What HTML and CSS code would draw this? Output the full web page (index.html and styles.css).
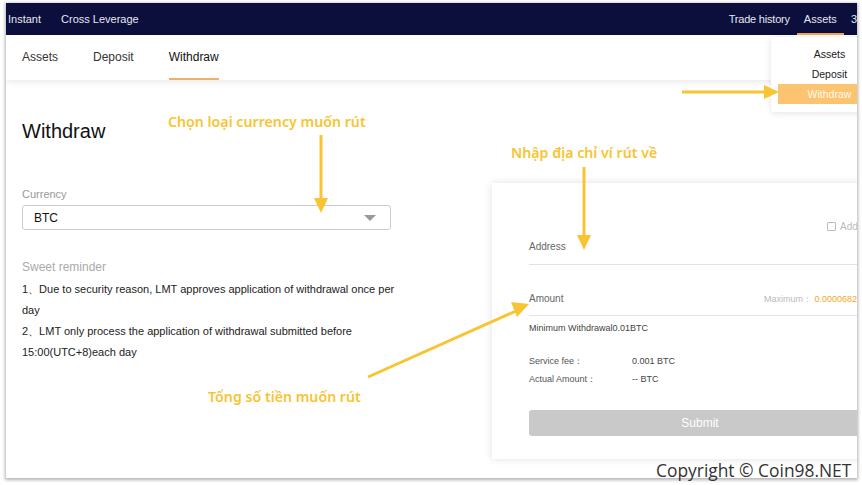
FILE: index.html
```html
<!DOCTYPE html>
<html lang="vi">
	<head>
		<title>Withdraw</title>
		<meta charset="UTF-8">
		<link rel="stylesheet" href="styles.css">
	</head>
	<body>
		<div class="frame">
			<div class="topBar">
				<div class="topLeft">
					<span>Instant</span>
					<span>Cross Leverage</span>
				</div>
				<div class="topRight">
					<span class="topItem">Trade history</span>
					<span class="topItem topActive">Assets</span>
					<span class="topItem">3</span>
				</div>
			</div>
			<div class="subNav">
				<span class="subItem">Assets</span>
				<span class="subItem">Deposit</span>
				<span class="subItem subActive">Withdraw</span>
			</div>
			<div class="content">
				<div class="leftCol">
					<h1>Withdraw</h1>
					<p class="fieldLabel">Currency</p>
					<div class="selectBox">
						<span>BTC</span>
						<span class="caret"></span>
					</div>
					<p class="reminderTitle">Sweet reminder</p>
					<p class="reminderText">1、Due to security reason, LMT approves application of withdrawal once per day</p>
					<p class="reminderText">2、LMT only process the application of withdrawal submitted before 15:00(UTC+8)each day</p>
				</div>
				<div class="card">
					<div class="bookRow">
						<span class="checkBox"></span>
						<span>Add</span>
					</div>
					<div class="inputRow addressRow">
						<span>Address</span>
					</div>
					<div class="inputRow amountRow">
						<span>Amount</span>
						<span class="maxText">Maximum： <b>0.0000682B</b></span>
					</div>
					<p class="minText">Minimum Withdrawal0.01BTC</p>
					<div class="feeRow"><span class="feeLabel">Service fee：</span><span>0.001 BTC</span></div>
					<div class="feeRow"><span class="feeLabel">Actual Amount：</span><span>-- BTC</span></div>
					<div class="submitButton">Submit</div>
				</div>
			</div>
			<div class="dropMenu">
				<div class="dropItem">Assets</div>
				<div class="dropItem">Deposit</div>
				<div class="dropItem dropActive">Withdraw</div>
			</div>
		</div>

		<!-- ghi chu huong dan -->
		<svg class="arrows" width="862" height="485" viewBox="0 0 862 485">
			<g stroke="#f8c432" stroke-width="3" fill="#f8c432">
				<line x1="682" y1="92" x2="766" y2="92"/>
				<polygon stroke="none" points="764,85 779,92 764,99"/>
				<line x1="321" y1="135" x2="321" y2="200"/>
				<polygon stroke="none" points="314,198 321,213 328,198"/>
				<line x1="584" y1="167" x2="584" y2="237"/>
				<polygon stroke="none" points="577,235 584,250 591,235"/>
				<line x1="368" y1="377" x2="516" y2="311"/>
				<polygon stroke="none" points="511,302 529,304 517,317"/>
			</g>
		</svg>
		<p class="note noteCurrency">Chọn loại currency muốn rút</p>
		<p class="note noteAddress">Nhập địa chỉ ví rút về</p>
		<p class="note noteAmount">Tổng số tiền muốn rút</p>
		<p class="copyright">Copyright © Coin98.NET</p>
	</body>
</html>
```

FILE: styles.css
```css
body {
	margin : 0;
	background-color : #fff;
	font-family : "Liberation Sans", Arial, sans-serif;
	position : relative;
	width : 862px;
	height : 485px;
	overflow : hidden;
}
p {
	margin : 0;
	padding : 0;
}

.frame {
	position : relative;
	margin : 3px 0 0 6px;
	width : 851px;
	height : 475px;
	overflow : hidden;
	background-color : #fff;
	box-shadow : 0 1px 3px 1px rgba(0, 0, 0, 0.3);
}

/* barre du haut */
.topBar {
	height : 32px;
	background-color : #0c0e3b;
	color : #e6e8f2;
	font-size : 11px;
	display : flex;
	justify-content : space-between;
	align-items : stretch;
}
.topLeft {
	display : flex;
	align-items : center;
	gap : 20px;
	padding-left : 2px;
}
.topRight {
	display : flex;
}
.topItem {
	display : flex;
	align-items : center;
	padding : 2px 7px 0 7px;
	border-bottom : 2px solid transparent;
}
.topItem:first-child {
	letter-spacing : -0.2px;
}
.topItem:last-child {
	padding-right : 0;
}
.topActive {
	border-bottom-color : #f2a957;
}

.subNav {
	position : relative;
	height : 45px;
	display : flex;
	gap : 35px;
	padding-left : 16px;
	background-color : #fff;
	box-shadow : 0 3px 6px rgba(0, 0, 0, 0.07);
	font-size : 12px;
	color : #333;
}
.subItem {
	display : flex;
	align-items : center;
	border-bottom : 2px solid transparent;
}
.subActive {
	color : #111;
	border-bottom-color : #eab26a;
}

/* contenu */
.content {
	display : flex;
}
.leftCol {
	width : 470px;
	padding-left : 16px;
	flex-shrink : 0;
}
h1 {
	margin : 39px 0 0 0;
	font-size : 20px;
	line-height : 24px;
	font-weight : normal;
	color : #111;
}
.fieldLabel {
	margin-top : 44px;
	font-size : 11px;
	line-height : 14px;
	color : #999;
}
.selectBox {
	margin-top : 4px;
	width : 369px;
	height : 25px;
	box-sizing : border-box;
	border : 1px solid #ccc;
	border-radius : 3px;
	display : flex;
	justify-content : space-between;
	align-items : center;
	padding : 0 14px 0 11px;
	font-size : 12px;
	color : #111;
}
.caret {
	width : 0;
	height : 0;
	border-left : 6px solid transparent;
	border-right : 6px solid transparent;
	border-top : 6px solid #999;
}
.reminderTitle {
	margin-top : 29px;
	font-size : 12px;
	line-height : 16px;
	color : #aaa;
}
.reminderText {
	width : 380px;
	font-size : 11px;
	line-height : 21px;
	color : #222;
}
.reminderTitle + .reminderText {
	margin-top : 4px;
}

.card {
	margin-top : 103px;
	width : 416px;
	flex-shrink : 0;
	box-sizing : border-box;
	padding : 34px 37px 23px 37px;
	background-color : #fff;
	box-shadow : 0 0 8px rgba(0, 0, 0, 0.12);
}
.bookRow {
	height : 18px;
	display : flex;
	align-items : center;
	gap : 4px;
	margin-left : 298px;
	font-size : 10px;
	color : #bbb;
	white-space : nowrap;
}
.checkBox {
	flex-shrink : 0;
	width : 7px;
	height : 7px;
	border : 1px solid #bbb;
	border-radius : 1px;
}
.inputRow {
	display : flex;
	justify-content : space-between;
	align-items : center;
	border-bottom : 1px solid #e2e2e2;
	font-size : 10px;
	line-height : 14px;
	color : #666;
}
.addressRow {
	padding : 5px 0 10px 0;
}
.amountRow {
	padding : 27px 0 9px 0;
}
.maxText {
	font-size : 9px;
	color : #bbb;
	white-space : nowrap;
	margin-right : 8px;
}
.maxText b {
	font-weight : normal;
	color : #f5a623;
}
.minText {
	margin-top : 6px;
	font-size : 9px;
	line-height : 12px;
	color : #444;
}
.feeRow {
	font-size : 9px;
	line-height : 18px;
	color : #444;
	display : flex;
}
.minText + .feeRow {
	margin-top : 18px;
}
.feeLabel {
	width : 103px;
	color : #555;
}
.submitButton {
	margin-top : 22px;
	height : 26px;
	border-radius : 3px;
	background-color : #c9c9c9;
	color : #fff;
	font-size : 12px;
	display : flex;
	align-items : center;
	justify-content : center;
}

/* menu deroulant */
.dropMenu {
	position : absolute;
	top : 34px;
	left : 765px;
	width : 110px;
	padding : 7px 0 8px 7px;
	box-sizing : border-box;
	background-color : #fff;
	box-shadow : 0 1px 6px rgba(0, 0, 0, 0.12);
	border-radius : 3px;
	font-size : 10.5px;
	color : #222;
}
.dropItem {
	height : 20px;
	line-height : 20px;
	text-align : center;
}
.dropActive {
	background-color : #fcc470;
	color : #fff8ee;
}

/* annotations */
.arrows {
	position : absolute;
	top : 0;
	left : 0;
	pointer-events : none;
}
.note {
	position : absolute;
	font-family : "Noto Sans", sans-serif;
	font-weight : 600;
	font-size : 14.2px;
	line-height : 18px;
	color : #f8c432;
	white-space : nowrap;
}
.noteCurrency {
	left : 168px;
	top : 113px;
}
.noteAddress {
	left : 511px;
	top : 144px;
}
.noteAmount {
	left : 208px;
	top : 388px;
}
.copyright {
	position : absolute;
	left : 656px;
	top : 459px;
	font-family : "Open Sans", sans-serif;
	font-size : 17.4px;
	line-height : 22px;
	color : #333;
	white-space : nowrap;
}
```
